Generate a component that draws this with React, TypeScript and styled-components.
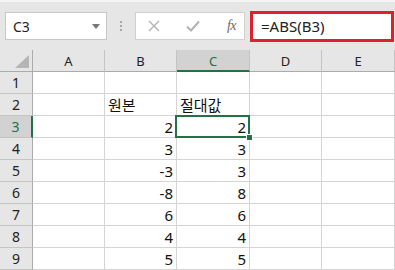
import React from 'react';
import styled, { createGlobalStyle, css } from 'styled-components';

const GlobalStyle = createGlobalStyle`
  html, body {
    margin: 0;
    padding: 0;
    background: #ffffff;
    font-family: 'Noto Sans', 'Noto Sans CJK KR', sans-serif;
    overflow: hidden;
  }
`;

const Sheet = styled.div`
  width: 395px;
  height: 270px;
  overflow: hidden;
  background: #ffffff;
`;

const FormulaBar = styled.div`
  height: 48px;
  border-top: 2px solid #f4f4f4;
  background: #e6e6e6;
  display: flex;
  align-items: center;
  padding: 0 0 0 5px;
`;

const NameBox = styled.div`
  width: 102px;
  height: 28px;
  box-sizing: border-box;
  background: #ffffff;
  border: 1px solid #c6c6c6;
  display: flex;
  align-items: center;
  justify-content: space-between;
  padding: 0 6px 0 7px;
  font-size: 14px;
  color: #222;
`;

const DropArrow = styled.span`
  width: 0;
  height: 0;
  border-left: 4px solid transparent;
  border-right: 4px solid transparent;
  border-top: 5px solid #777;
`;

const Grip = styled.div`
  width: 3px;
  margin: 0 12px 0 13px;
  display: flex;
  flex-direction: column;
  gap: 2px;

  span {
    width: 2px;
    height: 2px;
    background: #a9a9a9;
  }
`;

const ButtonBox = styled.div`
  width: 110px;
  height: 28px;
  box-sizing: border-box;
  background: #ffffff;
  border: 1px solid #d0d0d0;
  display: flex;
  align-items: center;
  justify-content: space-between;
  padding: 0 8px 0 12px;
`;

const Fx = styled.span`
  font-family: 'Liberation Serif', serif;
  font-style: italic;
  font-size: 14px;
  color: #6a6a6a;
  letter-spacing: -0.5px;
`;

const FormulaInput = styled.div`
  flex: 1;
  height: 31px;
  margin: 0 1px 0 5px;
  box-sizing: border-box;
  background: #ffffff;
  border: 3px solid #e0202c;
  display: flex;
  align-items: center;
  padding: 0 0 1px 8px;
  font-size: 15px;
  color: #222;
`;

const Grid = styled.div`
  display: grid;
  grid-template-columns: 33px 72px 72px 73px 72px 1fr;
  grid-auto-rows: 22px;
`;

const headerBase = css`
  background: #e6e6e6;
  box-sizing: border-box;
  display: flex;
  align-items: center;
  justify-content: center;
  font-size: 13px;
  color: #222;
`;

const Corner = styled.div`
  ${headerBase};
  border-right: 1px solid #ababab;
  border-bottom: 1px solid #ababab;
  position: relative;

  &::after {
    content: '';
    position: absolute;
    right: 3px;
    bottom: 3px;
    width: 0;
    height: 0;
    border-left: 14px solid transparent;
    border-bottom: 13px solid #b5b5b5;
  }
`;

const ColHead = styled.div<{ $active?: boolean }>`
  ${headerBase};
  border-right: 1px solid #c4c4c4;
  border-bottom: ${(p) => (p.$active ? '2px solid #217346' : '1px solid #ababab')};
  background: ${(p) => (p.$active ? '#d2d2d2' : '#e6e6e6')};
  color: ${(p) => (p.$active ? '#217346' : '#222')};
  padding-top: ${(p) => (p.$active ? '1px' : '0')};
`;

const RowHead = styled.div<{ $active?: boolean }>`
  ${headerBase};
  border-right: ${(p) => (p.$active ? '2px solid #217346' : '1px solid #ababab')};
  border-bottom: 1px solid #c4c4c4;
  background: ${(p) => (p.$active ? '#d2d2d2' : '#e6e6e6')};
  color: ${(p) => (p.$active ? '#217346' : '#222')};
  font-size: 14px;
`;

const Cell = styled.div<{ $align?: 'left' | 'right'; $selected?: boolean }>`
  box-sizing: border-box;
  border-right: 1px solid #d4d4d4;
  border-bottom: 1px solid #d4d4d4;
  display: flex;
  align-items: flex-end;
  justify-content: ${(p) => (p.$align === 'left' ? 'flex-start' : 'flex-end')};
  padding: 0 3px 0 3px;
  font-size: 15px;
  line-height: 20px;
  color: #111;
  position: relative;

  ${(p) =>
    p.$selected &&
    css`
      z-index: 1;
      &::before {
        content: '';
        position: absolute;
        left: -2px;
        top: -1px;
        right: -1px;
        bottom: -1px;
        border: 2px solid #217346;
      }
      &::after {
        content: '';
        position: absolute;
        right: -4px;
        bottom: -4px;
        width: 7px;
        height: 7px;
        background: #217346;
        border: 1px solid #ffffff;
        box-sizing: border-box;
      }
    `}
`;

const Cross = () => (
  <svg width="12" height="12" viewBox="0 0 12 12">
    <path d="M1 1 L11 11 M11 1 L1 11" stroke="#b3b3b3" strokeWidth="1.4" fill="none" />
  </svg>
);

const Check = () => (
  <svg width="14" height="12" viewBox="0 0 14 12">
    <path d="M1 6.5 L5 10.5 L13 1.5" stroke="#b3b3b3" strokeWidth="2" fill="none" />
  </svg>
);

const columns = ['A', 'B', 'C', 'D', 'E'];

type Row = { n: number; b: string; c: string; text?: boolean };

const rows: Row[] = [
  { n: 1, b: '', c: '' },
  { n: 2, b: '원본', c: '절대값', text: true },
  { n: 3, b: '2', c: '2' },
  { n: 4, b: '3', c: '3' },
  { n: 5, b: '-3', c: '3' },
  { n: 6, b: '-8', c: '8' },
  { n: 7, b: '6', c: '6' },
  { n: 8, b: '4', c: '4' },
  { n: 9, b: '5', c: '5' },
];

const App: React.FC = () => {
  return (
    <Sheet>
      <GlobalStyle />
      <FormulaBar>
        <NameBox>
          C3
          <DropArrow />
        </NameBox>
        <Grip>
          <span />
          <span />
          <span />
        </Grip>
        <ButtonBox>
          <Cross />
          <Check />
          <Fx>fx</Fx>
        </ButtonBox>
        <FormulaInput>=ABS(B3)</FormulaInput>
      </FormulaBar>
      <Grid>
        <Corner />
        {columns.map((c) => (
          <ColHead key={c} $active={c === 'C'}>
            {c}
          </ColHead>
        ))}
        {rows.map((r) => (
          <React.Fragment key={r.n}>
            <RowHead $active={r.n === 3}>{r.n}</RowHead>
            <Cell />
            <Cell $align={r.text ? 'left' : 'right'}>{r.b}</Cell>
            <Cell $align={r.text ? 'left' : 'right'} $selected={r.n === 3}>
              {r.c}
            </Cell>
            <Cell />
            <Cell />
          </React.Fragment>
        ))}
      </Grid>
    </Sheet>
  );
};

export default App;
